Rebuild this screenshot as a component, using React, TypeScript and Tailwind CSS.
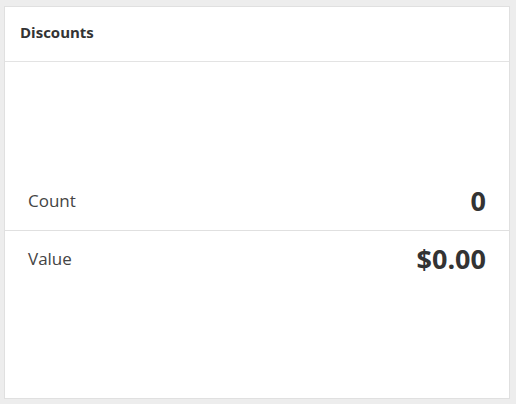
export default function App() {
  return (
    <div className="w-[516px] h-[404px] bg-[#ededed] pt-[6px] pl-[4px] pr-[6px] pb-[5px] font-['Open_Sans',sans-serif] text-[#333]">
      <div className="h-full bg-white border border-[#e0e0e0] flex flex-col">
        <div className="h-[55px] border-b border-[#e3e3e3] flex items-center px-[15px] pb-[3px] shrink-0">
          <span className="text-[15px] font-bold text-[#333]">Discounts</span>
        </div>
        <div className="flex-1 flex flex-col justify-center pt-[2px]">
          <div className="h-[59px] flex items-center justify-between pl-[23px] pr-[23px] border-b border-[#e0e0e0]">
            <span className="text-[17px] text-[#444]">Count</span>
            <span className="text-[27px] font-bold text-[#333]">0</span>
          </div>
          <div className="h-[59px] flex items-center justify-between pl-[23px] pr-[23px] pb-[3px]">
            <span className="text-[17px] text-[#444]">Value</span>
            <span className="text-[27px] font-bold text-[#333]">$0.00</span>
          </div>
        </div>
      </div>
    </div>
  );
}
